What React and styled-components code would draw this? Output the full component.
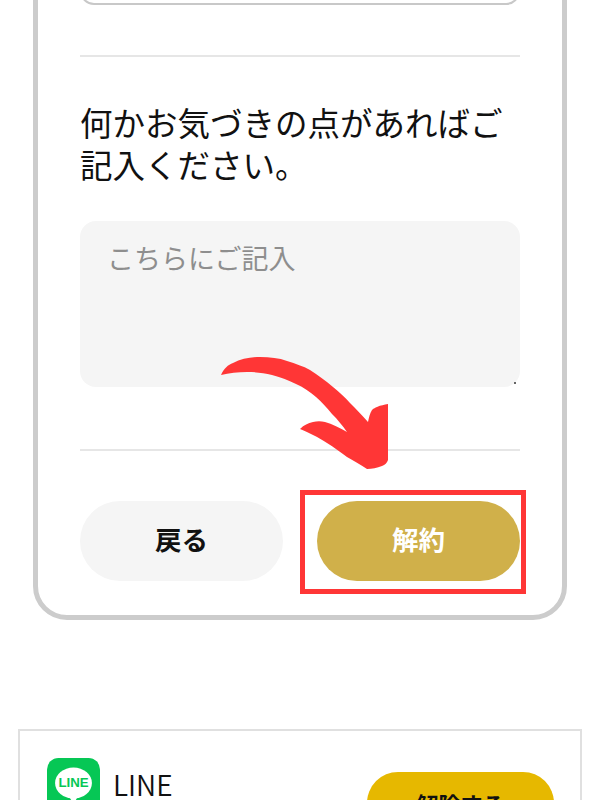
import React from "react";
import styled, { createGlobalStyle } from "styled-components";

const FONT = `"Noto Sans CJK JP", "Noto Sans", sans-serif`;

const App = () => {
  return (
    <Page>
      <GlobalStyle />
      <Frame>
        <Field />
        <Divider />
        <Heading>何かお気づきの点があればご記入ください。</Heading>
        <CommentWrap>
          <Comment placeholder="こちらにご記入" />
        </CommentWrap>
        <Divider $spaced />
        <Actions>
          <BackButton>戻る</BackButton>
          <CancelWrap>
            <CancelButton>解約</CancelButton>
            <Highlight />
          </CancelWrap>
        </Actions>
        <Arrow viewBox="0 0 170 118" aria-hidden="true">
          <path d="M2 23 C5 16 9 13 14 11 C22 7 31 5 41 5 C51 5 60 6 68 9 C77 12 84 14 91 18 C99 23 107 29 114 35 C120 40 126 45 131 51 C137 57 143 63 149 70 C150 65 151 61 153 58 C155 56 156 56 158 55 C162 53 165 53 169 52 L169 108 C168 111 166 113 163 114 C158 116 153 117 148 117 C142 113 135 109 128 105 C121 100 115 95 108 91 C103 88 99 85 94 83 C90 81 86 79 81 77 C85 73 89 71 94 70 C98 69 102 69 106 70 C113 72 121 76 128 80 C123 73 119 68 113 62 C108 56 103 50 97 45 C91 40 84 35 77 32 C69 28 61 25 53 23 C45 21 37 20 28 20 C19 20 10 21 2 23 Z" />
        </Arrow>
      </Frame>
      <AppCard>
        <AppInfo>
          <LineIcon viewBox="0 0 46 46" aria-hidden="true">
            <rect width="46" height="46" rx="10" fill="#06c755" />
            <ellipse cx="23" cy="21.7" rx="16" ry="13.5" fill="#fff" />
            <path d="M19 33 L27 33 L23 40 Z" fill="#fff" />
            <text x="23" y="25.6" textAnchor="middle">LINE</text>
          </LineIcon>
          <AppName>LINE</AppName>
        </AppInfo>
        <CardButton>解除する</CardButton>
      </AppCard>
    </Page>
  );
};

export default App;

const GlobalStyle = createGlobalStyle`
  html, body {
    margin: 0;
    background: #fff;
  }
`;

const Page = styled.div`
  position: relative;
  width: 600px;
  height: 800px;
  overflow: hidden;
  font-family: ${FONT};
  color: #111;
`;

const Frame = styled.div`
  position: relative;
  box-sizing: border-box;
  width: 534px;
  height: 687px;
  margin: -67px 0 0 33px;
  padding: 0 42px;
  border: 5px solid #cccccc;
  border-radius: 34px;
  background: #fff;
`;

const Field = styled.div`
  box-sizing: border-box;
  height: 67px;
  border: 2px solid #c8c8c8;
  border-radius: 14px;
`;

const Divider = styled.hr`
  height: 2px;
  margin: ${({ $spaced }) => ($spaced ? "62px 0 50px" : "50px 0 0")};
  border: none;
  background: #e6e6e6;
`;

const Heading = styled.h2`
  margin: 44px 0 0;
  font-size: 32.5px;
  font-weight: 400;
  line-height: 42px;
`;

const CommentWrap = styled.div`
  position: relative;
  margin-top: 36px;

  &::after {
    content: "";
    position: absolute;
    right: 4px;
    bottom: 3px;
    width: 2px;
    height: 2px;
    background: #666;
  }
`;

const Comment = styled.textarea`
  display: block;
  box-sizing: border-box;
  width: 440px;
  height: 166px;
  padding: 19px 28px 19px 27px;
  border: none;
  border-radius: 16px;
  outline: none;
  resize: none;
  background: #f5f5f5;
  font-family: ${FONT};
  font-size: 27px;
  line-height: 36px;

  &::placeholder {
    color: #8e8e8e;
    opacity: 1;
  }
`;

const Actions = styled.div`
  display: grid;
  grid-template-columns: 203px 203px;
  justify-content: space-between;
`;

const BackButton = styled.button`
  height: 80px;
  padding: 0 0 6px;
  border: none;
  border-radius: 40px;
  background: #f5f5f5;
  color: #111;
  font-family: ${FONT};
  font-size: 26.5px;
  font-weight: 700;
`;

const CancelWrap = styled.div`
  position: relative;
`;

const CancelButton = styled(BackButton)`
  width: 100%;
  background: #d0b04a;
  color: #fff;
`;

const Highlight = styled.div`
  position: absolute;
  top: -11px;
  left: -17px;
  width: 226px;
  height: 104px;
  box-sizing: border-box;
  border: 5px solid #ff3636;
`;

const Arrow = styled.svg`
  position: absolute;
  left: 181px;
  top: 414px;
  width: 170px;
  height: 118px;
  fill: #ff3636;
`;

const AppCard = styled.div`
  display: flex;
  justify-content: space-between;
  box-sizing: border-box;
  width: 564px;
  height: 200px;
  margin: 109px 0 0 18px;
  padding: 27px 26px 0 27px;
  border: 2px solid #e0e0e0;
`;

const AppInfo = styled.div`
  display: flex;
  align-items: flex-start;
  gap: 13px;
`;

const LineIcon = styled.svg`
  width: 53px;
  height: 53px;

  text {
    font-family: "Liberation Sans", sans-serif;
    font-size: 11.5px;
    font-weight: 700;
    fill: #06c755;
  }
`;

const AppName = styled.div`
  margin-top: 7px;
  font-family: ${FONT};
  font-size: 28px;
  font-weight: 350;
  line-height: 38px;
`;

const CardButton = styled.button`
  width: 187px;
  height: 62px;
  margin-top: 14px;
  padding: 0;
  border: none;
  border-radius: 31px;
  background: #e6b800;
  color: #111;
  font-family: ${FONT};
  font-size: 22px;
  font-weight: 700;
`;
